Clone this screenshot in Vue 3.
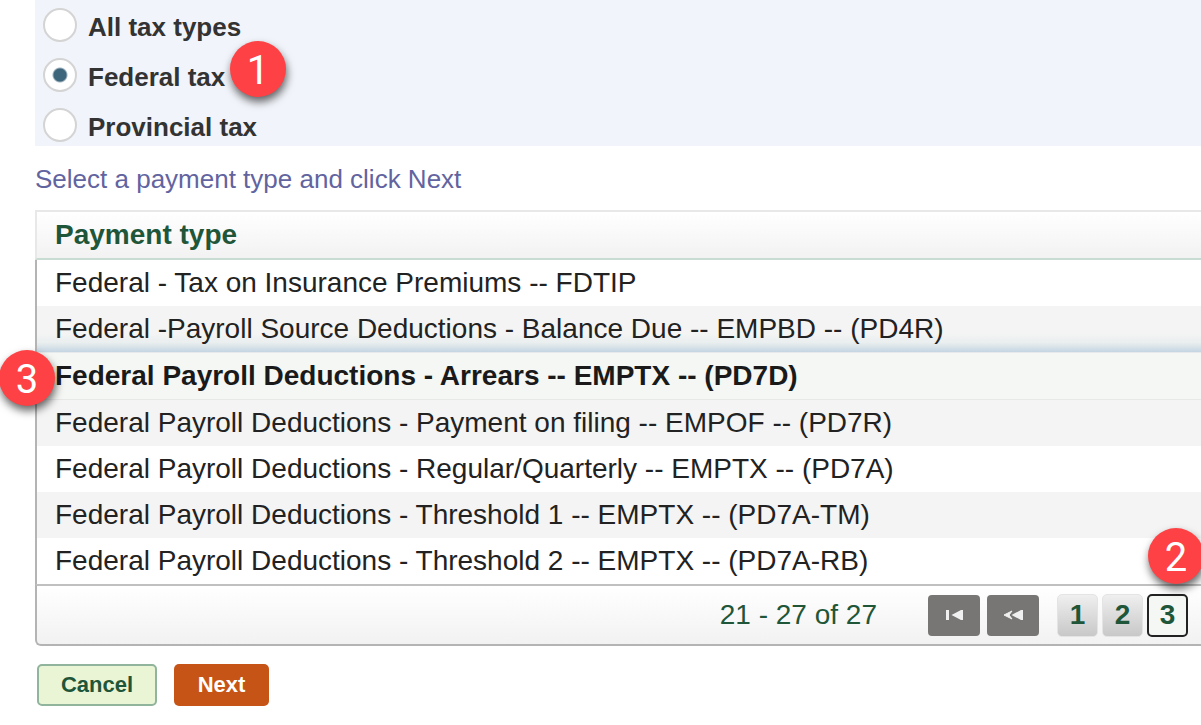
<script setup>
import { ref } from 'vue'

const taxType = ref('federal')
const taxTypes = [
  { id: 'all', label: 'All tax types' },
  { id: 'federal', label: 'Federal tax', step: 1 },
  { id: 'provincial', label: 'Provincial tax' },
]

const selected = ref(2)
const payments = [
  'Federal - Tax on Insurance Premiums -- FDTIP',
  'Federal -Payroll Source Deductions - Balance Due -- EMPBD -- (PD4R)',
  'Federal Payroll Deductions - Arrears -- EMPTX -- (PD7D)',
  'Federal Payroll Deductions - Payment on filing -- EMPOF -- (PD7R)',
  'Federal Payroll Deductions - Regular/Quarterly -- EMPTX -- (PD7A)',
  'Federal Payroll Deductions - Threshold 1 -- EMPTX -- (PD7A-TM)',
  'Federal Payroll Deductions - Threshold 2 -- EMPTX -- (PD7A-RB)',
]

const page = ref(3)
</script>

<template>
  <main class="screen">
    <div class="tax-types" role="radiogroup" aria-label="Tax type">
      <div v-for="t in taxTypes" :key="t.id" class="option">
        <input :id="t.id" v-model="taxType" type="radio" name="tax" :value="t.id" />
        <label :for="t.id">{{ t.label }}</label>
        <span v-if="t.step" class="badge badge-option">{{ t.step }}</span>
      </div>
    </div>

    <p class="hint">Select a payment type and click Next</p>

    <section class="grid">
      <table>
        <thead>
          <tr><th scope="col">Payment type</th></tr>
        </thead>
        <tbody>
          <tr
            v-for="(p, i) in payments"
            :key="p"
            :class="{ selected: i === selected }"
            @click="selected = i"
          >
            <td>
              {{ p }}
              <span v-if="i === 2" class="badge badge-row">3</span>
            </td>
          </tr>
        </tbody>
      </table>
      <nav class="pager" aria-label="Pages">
        <span class="range">21 - 27 of 27</span>
        <button class="jump" type="button" aria-label="First page" @click="page = 1">
          <svg width="18" height="10" viewBox="0 0 18 10">
            <path d="M1 0h3v10H1zM18 0v10h-2L6.500 5 16 0z" fill="#f0f0f0" />
          </svg>
        </button>
        <button class="jump" type="button" aria-label="Previous page" @click="page = Math.max(1, page - 1)">
          <svg width="22" height="10" viewBox="0 0 22 10">
            <path d="M21 0v10h-2L9.500 5 19 0z" fill="#f0f0f0" />
            <path d="M10 1 2 5l8 4-3-4z" fill="#f0f0f0" stroke="#f0f0f0" />
          </svg>
        </button>
        <div class="pages">
          <button
            v-for="n in 3"
            :key="n"
            type="button"
            class="page"
            :class="{ current: n === page }"
            @click="page = n"
          >{{ n }}</button>
          <span class="badge badge-page">2</span>
        </div>
      </nav>
    </section>

    <div class="actions">
      <button type="button" class="action cancel">Cancel</button>
      <button type="button" class="action next">Next</button>
    </div>
  </main>
</template>

<style>
body {
  background: #fff;
  overflow: hidden;
}
</style>

<style scoped>
.screen {
  padding-left: 35px;
  font-family: "Liberation Sans", Arial, sans-serif;
  color: #222;
}
button {
  font-family: inherit;
  font-weight: bold;
  padding: 0;
  cursor: pointer;
}
.tax-types {
  display: flex;
  flex-direction: column;
  gap: 16px;
  padding: 8px 8px 4px;
  background: #f1f4fa;
}
.option {
  position: relative;
  display: flex;
  align-items: center;
  align-self: flex-start;
  gap: 11px;
  height: 34px;
}
.option input {
  appearance: none;
  width: 34px;
  height: 34px;
  margin: 0;
  border: 2px solid #d4d4d4;
  border-radius: 50%;
  background: #fff;
}
.option input:checked {
  background: radial-gradient(circle, #3d657b 6px, #fff 8px);
}
.option label {
  padding-top: 4px;
  font-size: 26px;
  line-height: 30px;
  font-weight: bold;
  color: #333;
}
.hint {
  margin: 0;
  padding: 18px 0 16px;
  font-size: 26px;
  line-height: 30px;
  color: #6264a0;
}
table {
  width: 100%;
  border-collapse: separate;
  border-spacing: 0;
}
th {
  height: 46px;
  padding: 0 18px;
  border: 2px solid #e8e8e8;
  border-right: 0;
  border-bottom-color: #c8dcd3;
  background: linear-gradient(#fff, #f2f2f2);
  text-align: left;
  font-size: 28px;
  line-height: 32px;
  color: #1f5639;
}
td {
  position: relative;
  height: 46px;
  padding: 0 18px;
  border-left: 2px solid #b4b4b4;
  font-size: 28px;
  line-height: 32px;
  white-space: nowrap;
}
tbody tr:nth-child(even) td {
  background: #f4f4f4;
}
tbody tr:has(+ .selected) td {
  background: linear-gradient(#f4f4f4 60%, #e9eeef 80%, #c5d5e2);
}
tbody tr.selected td {
  background: #f4f7f3;
  border-top: 1px solid #e6eaea;
  border-bottom: 1px solid #e8e8e8;
  font-weight: bold;
  color: #1a1a1a;
}
.pager {
  display: flex;
  align-items: center;
  justify-content: flex-end;
  gap: 7px;
  height: 58px;
  padding-right: 13px;
  border: solid #b4b4b4;
  border-width: 2px 0 2px 2px;
  border-top-color: #c0c0c0;
  border-radius: 0 0 0 6px;
  background: linear-gradient(#fff, #f2f2f2);
}
.range {
  margin-right: 44px;
  font-size: 28px;
  line-height: 32px;
  color: #1f5639;
}
.jump {
  display: flex;
  align-items: center;
  justify-content: center;
  width: 52px;
  height: 41px;
  border: 0;
  border-radius: 4px;
  background: #777674;
}
.pages {
  position: relative;
  display: flex;
  gap: 4px;
  margin-left: 11px;
}
.page {
  width: 41px;
  height: 43px;
  border: 1px solid #e4e4e4;
  border-radius: 5px;
  background: linear-gradient(#efefef, #c8c8c8);
  font-size: 28px;
  line-height: 32px;
  color: #1f5639;
}
.page.current {
  border: 2px solid #222;
  background: #f4f7f3;
}
.actions {
  display: flex;
  gap: 17px;
  padding: 18px 2px;
}
.action {
  height: 42px;
  border-radius: 5px;
  font-size: 22px;
  line-height: 28px;
}
.cancel {
  width: 120px;
  border: 2px solid #90b49c;
  background: #e9f5d5;
  color: #1f5639;
}
.next {
  width: 95px;
  border: 0;
  background: #c65417;
  color: #fff;
}
.badge {
  position: absolute;
  z-index: 1;
  width: 56px;
  height: 56px;
  border-radius: 50%;
  background: #fd4144;
  box-shadow: 1px 5px 8px rgba(0, 0, 0, 0.6);
  color: #fff;
  font-family: Roboto, "Noto Sans", sans-serif;
  font-size: 40px;
  font-weight: normal;
  line-height: 60px;
  text-align: center;
}
.badge-option {
  left: 187px;
  top: -17px;
}
.badge-row {
  left: -38px;
  top: -3px;
}
.badge-page {
  right: -16px;
  top: -66px;
}
</style>
